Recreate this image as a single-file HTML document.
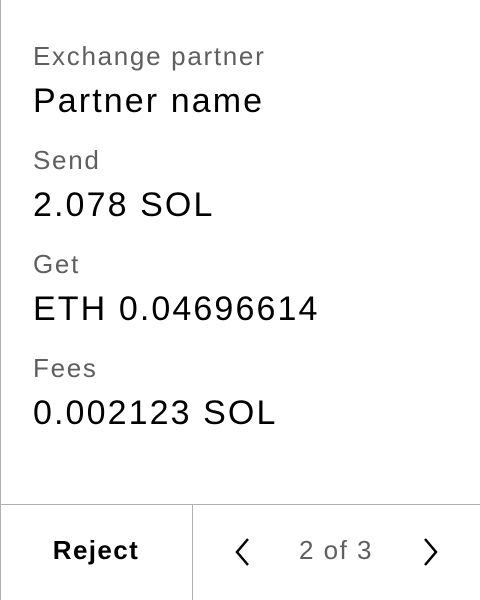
<!DOCTYPE html>
<html><head><style>
html,body{margin:0;padding:0;background:#fff;}
body{width:480px;height:600px;position:relative;overflow:hidden;font-family:"Liberation Sans",sans-serif;}
.lb{position:absolute;left:0;top:0;width:1px;height:600px;background:#b0b0b0;}
.t{position:absolute;left:33px;white-space:nowrap;line-height:1;}
.l{font-size:26px;color:#5f5f5f;letter-spacing:1.7px;}
.v{font-size:34px;color:#000;letter-spacing:2.1px;}
.hl{position:absolute;left:0;top:504px;width:480px;height:1px;background:#b0b0b0;}
.vl{position:absolute;left:192px;top:504px;width:1px;height:96px;background:#b0b0b0;}
</style></head><body>
<div class="lb"></div>
<div class="t l" style="top:43px">Exchange partner</div>
<div class="t v" style="top:84px">Partner name</div>
<div class="t l" style="top:147px">Send</div>
<div class="t v" style="top:188px">2.078 SOL</div>
<div class="t l" style="top:251px">Get</div>
<div class="t v" style="top:292px">ETH 0.04696614</div>
<div class="t l" style="top:355px">Fees</div>
<div class="t v" style="top:396px">0.002123 SOL</div>
<div class="hl"></div><div class="vl"></div>
<div style="position:absolute;left:0;width:192px;top:537px;text-align:center;font-size:26px;font-weight:bold;line-height:1;letter-spacing:1.4px;">Reject</div>
<svg style="position:absolute;left:232px;top:536px" width="22" height="32"><path d="M16 3 L5 16 L16 29" fill="none" stroke="#000" stroke-width="2.5"/></svg>
<div style="position:absolute;left:286px;width:100px;top:537px;text-align:center;font-size:26px;color:#5f5f5f;line-height:1;letter-spacing:1.5px;">2 of 3</div>
<svg style="position:absolute;left:420px;top:536px" width="22" height="32"><path d="M5 3 L16 16 L5 29" fill="none" stroke="#000" stroke-width="2.5"/></svg>
</body></html>
